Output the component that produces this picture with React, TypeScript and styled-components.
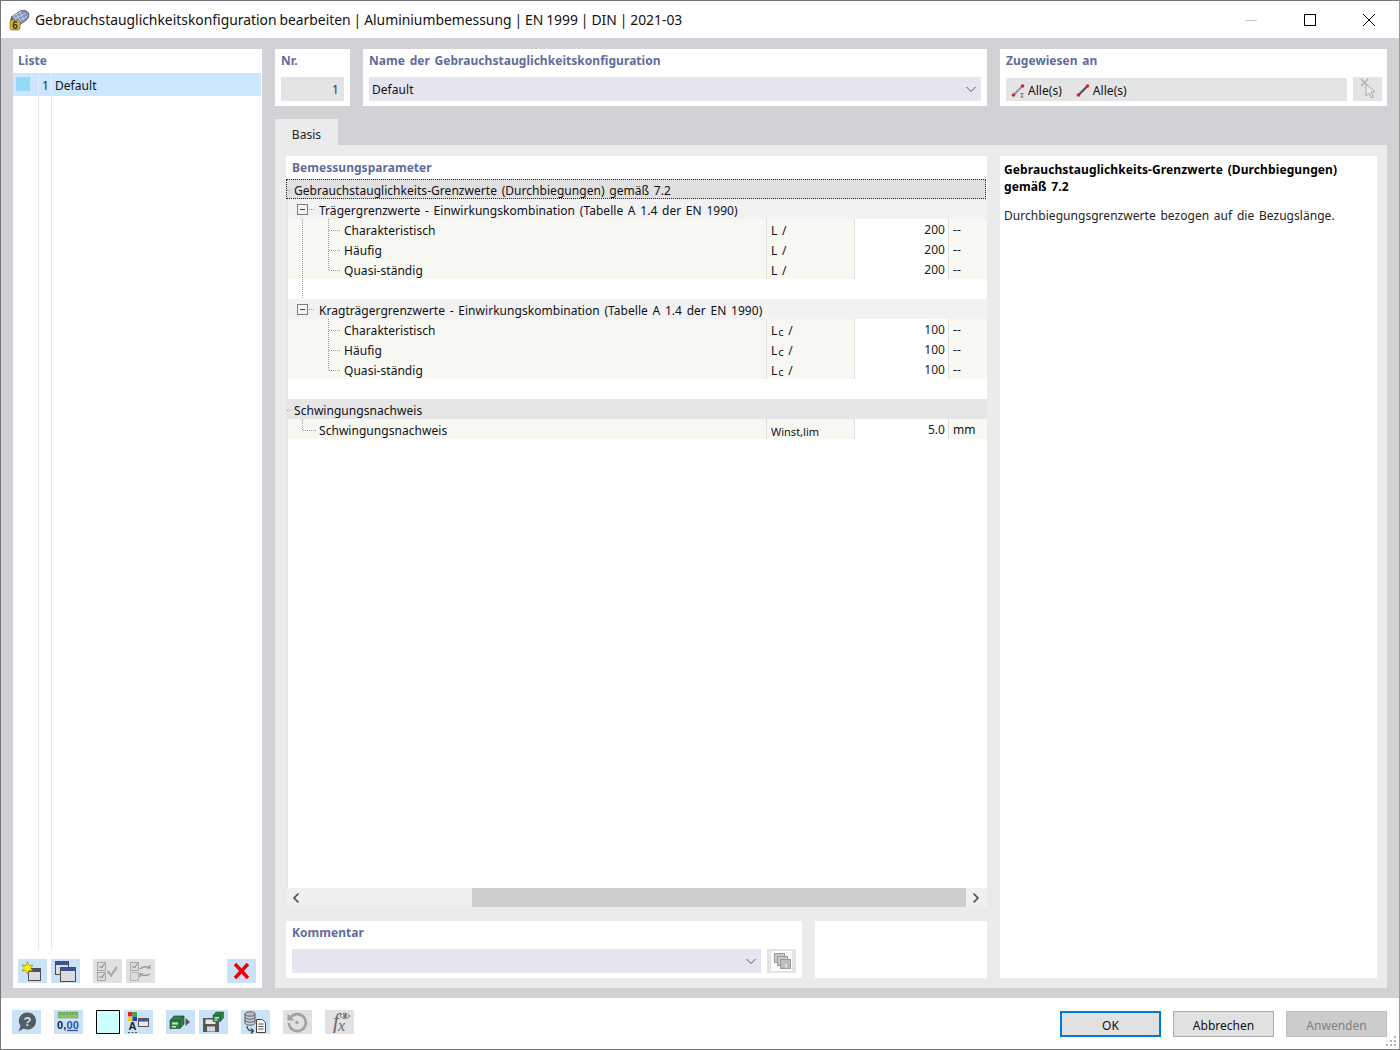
import React from "react";
import styled, { createGlobalStyle } from "styled-components";

const Global = createGlobalStyle`
  html, body { margin: 0; padding: 0; background: #fff; }
  body { font-family: "Noto Sans", "Open Sans", sans-serif; font-size: 12px; color: #101018; word-spacing: 1.5px; letter-spacing: 0.04px; }
  * { box-sizing: border-box; }
`;

const Win = styled.div`
  width: 1400px; height: 1050px; border: 1px solid #767676; border-right-color: #9a9a9a;
  display: grid; grid-template-rows: 37px 960px 1fr; background: #fff; overflow: hidden;
`;
const TitleBar = styled.header`
  display: flex; align-items: center; padding-left: 7px; background: #fff;
`;
const TitleText = styled.div`
  margin-left: 5px; font-size: 13.88px; flex: 1; white-space: nowrap; color: #111; word-spacing: -0.7px; letter-spacing: 0;
`;
const WinControls = styled.div`
  display: flex; width: 178px; padding-right: 1px; flex: none; height: 100%; align-items: center;
`;
const WinControl = styled.span`
  width: 59px; flex: none; display: flex; justify-content: center; align-items: center;
`;
const Main = styled.main`
  background: #d1d1d6; padding: 11px 12px 10px; display: grid;
  grid-template-columns: 249px 1112px; column-gap: 13px;
`;
const ListPanel = styled.section`
  background: #fff; display: flex; flex-direction: column; min-height: 0;
`;
const Label = styled.div`
  color: #5f6c9c; font-weight: 700; font-size: 12px; line-height: 16px; height: 24px; padding-top: 4px;
`;
const ListLabel = styled(Label)`padding-left: 5px;`;
const ListRow = styled.div`
  height: 23px; margin-right: 1px; background: #cce6fd; display: grid;
  grid-template-columns: 26px 13px 1fr; line-height: 25px;
`;
const Swatch = styled.span`
  display: block; height: 23px; padding: 4px 0 0 3px; border-right: 1px solid #e4f1fc;
  &::before { content: ""; display: block; width: 14px; height: 14px; background: #94d8f6; }
`;
const ListNum = styled.span`text-align: right; color: #0c2a50; padding-right: 2px; border-right: 1px solid #e4f1fc;`;
const ListName = styled.span`padding-left: 3px;`;
const ListBody = styled.div`
  flex: 1; display: grid; grid-template-columns: 26px 13px 1fr; min-height: 0;
`;
const ListCol = styled.div`border-right: 1px solid #e9e9e9; margin-bottom: 9px;`;
const ListTools = styled.div`
  height: 24px; margin: 0 0 5px 5px; display: flex; flex: none;
`;
const IconBtn = styled.button<{ $off?: boolean; $gap?: number }>`
  width: 29px; height: 24px; padding: 0; border: 0; flex: none;
  background: ${(p) => (p.$off ? "#e1e1e1" : "#c9e2f8")};
  margin-left: ${(p) => p.$gap ?? 0}px; display: flex; align-items: center; justify-content: center;
`;
const RightCol = styled.div`display: flex; flex-direction: column; min-height: 0;`;
const TopRow = styled.div`display: flex; gap: 13px; height: 57px; flex: none;`;
const TopBox = styled.section<{ $w: number }>`
  width: ${(p) => p.$w}px; flex: none; background: #fff; padding: 0 6px;
`;
const AssignBox = styled(TopBox)`padding-right: 5px;`;
const FieldGray = styled.div`
  height: 24px; background: #e4e4e4; text-align: right; padding: 4px 5px 0 0; line-height: 17px; margin-top: 4px; color: #333;
`;
const Select = styled.div`
  height: 24px; background: #e5e5f0; display: flex; align-items: center; justify-content: space-between;
  padding: 0 4px 0 3px; margin-top: 4px;
`;
const AssignRow = styled.div`display: flex; gap: 6px; height: 24px; margin-top: 4px;`;
const AssignField = styled.div`
  flex: 1; height: 23px; margin-top: 1px; background: #e4e4e4; display: flex; align-items: center; padding-left: 4px;
`;
const AssignItem = styled.span`
  display: inline-flex; align-items: center; gap: 2px; margin-right: 13px; line-height: 14px; padding-top: 2px;
`;
const PickBtn = styled.div`
  width: 29px; height: 24px; background: #e4e4e4; display: flex; align-items: center; justify-content: center;
`;
const Tabs = styled.div`display: flex; margin-top: 13px; height: 26px; flex: none;`;
const Tab = styled.div`
  width: 63px; background: #ebebeb; text-align: center; line-height: 32px; color: #222;
`;
const TabPanel = styled.div`
  flex: 1; min-height: 0; background: #ebebeb; padding: 11px 10px 10px 11px;
  display: grid; grid-template-columns: 701px 377px; column-gap: 13px;
`;
const LeftStack = styled.div`display: flex; flex-direction: column; gap: 14px; min-height: 0;`;
const Params = styled.section`flex: 1; background: #fff; display: flex; flex-direction: column; min-height: 0;`;
const ParamsLabel = styled(Label)`height: 23px; padding-left: 6px; flex: none;`;
const Table = styled.div`flex: 1; border-left: 2px solid #e6e6e6; display: flex; flex-direction: column; min-height: 0;`;
const Group = styled.div<{ $focus?: boolean }>`
  height: 20px; margin-left: -2px; padding-left: 1px; display: flex; align-items: flex-start; line-height: 24px; flex: none;
  background: ${(p) => (p.$focus ? "#e0e0e0" : "#e6e6e6")};
  outline: ${(p) => (p.$focus ? "1px dotted #222" : "none")};
  outline-offset: -1px; margin-right: ${(p) => (p.$focus ? 1 : 0)}px;
`;
const Sub = styled.div`
  height: 20px; background: #f2f2f2; display: flex; align-items: flex-start; line-height: 24px; flex: none;
`;
const Row = styled.div`
  height: 20px; display: grid; grid-template-columns: 478px 88px 94px 39px; grid-template-rows: 20px;
  background: #f7f8f2; flex: none;
`;
const NameCell = styled.div`display: flex; align-items: flex-start; white-space: nowrap; height: 20px; line-height: 24px;`;
const SymCell = styled.div`
  border-left: 1px solid #e0e0e0; padding-left: 4px; line-height: 24px; height: 20px; white-space: nowrap;
`;
const SmallSym = styled.span`font-size: 11px; word-spacing: 0; letter-spacing: 0; position: relative; top: 1px;`;
const LowC = styled.span`font-size: 11px; position: relative; top: 1px; padding-left: 1px;`;
const ValCell = styled.div`
  border-left: 1px solid #e0e0e0; background: #fff; text-align: right; padding-right: 3px; line-height: 22px; height: 20px; color: #222;
`;
const UnitCell = styled.div`border-left: 1px solid #e0e0e0; padding-left: 4px; line-height: 22px; height: 20px;`;
const Blank = styled.div`height: 20px; flex: none; display: flex;`;
const Scroll = styled.div`
  height: 19px; flex: none; background: #f0f0f0; display: grid; grid-template-columns: 186px 1fr 21px; align-items: center;
`;
const ScrollEnd = styled.span`display: flex; align-items: center; padding-left: 6px; height: 100%;`;
const ScrollThumb = styled.div`height: 19px; background: #cdcdcd;`;
const BottomRow = styled.div`display: flex; gap: 13px; height: 57px; flex: none;`;
const CommentBox = styled.section`width: 516px; background: #fff; padding: 0 6px;`;
const CommentRow = styled.div`display: flex; gap: 6px; margin-top: 4px;`;
const CommentSel = styled(Select)`flex: 1; margin-top: 0;`;
const SmallBtn = styled.div`
  width: 29px; height: 24px; background: #e4e4e4; display: flex; align-items: center; justify-content: center;
`;
const EmptyBox = styled.section`width: 172px; background: #fff;`;
const Desc = styled.aside`background: #fff; padding: 5px 4px; line-height: 17px;`;
const DescTitle = styled.div`font-weight: 700; color: #000; letter-spacing: 0.1px;`;
const DescText = styled.p`margin: 12px 0 0; color: #222;`;
const Footer = styled.footer`
  display: flex; align-items: flex-start; padding: 12px 12px 0 11px; position: relative; background: #fff;
`;
const ColorBox = styled.div`
  width: 24px; height: 24px; background: #ccffff; border: 1.5px solid #000; margin-left: 13px; flex: none;
`;
const Spacer = styled.div`flex: 1;`;
const DlgBtn = styled.button<{ $kind?: "primary" | "off" }>`
  width: 101px; height: 26px; margin: 1px 0 0 12px; font: inherit; padding: 2px 0 0;
  background: ${(p) => (p.$kind === "off" ? "#cccccc" : "#e1e1e1")};
  color: ${(p) => (p.$kind === "off" ? "#7f7f7f" : "#111")};
  border: ${(p) => (p.$kind === "primary" ? "2px solid #0078d7" : p.$kind === "off" ? "1px solid #bfbfbf" : "1px solid #adadad")};
`;
const Grip = styled.svg`position: absolute; right: 1px; bottom: 1px;`;

const dot = { stroke: "#9c9c9c", strokeWidth: 1, strokeDasharray: "1 1", fill: "none" } as const;

const Leaf = ({ last, trunk }: { last?: boolean; trunk?: boolean }) => (
  <svg width="56" height="20" style={{ flex: "none" }}>
    {trunk && <path d="M14.5 0V20" {...dot} />}
    <path d={last ? "M40.5 0V11" : "M40.5 0V20"} {...dot} />
    <path d="M41 11.5H53" {...dot} />
  </svg>
);
const Node = () => (
  <svg width="31" height="20" style={{ flex: "none" }}>
    <rect x="9.5" y="5.5" width="10" height="10" fill="#f4f4f4" stroke="#7d7d7d" />
    <path d="M12 10.5H17" stroke="#444" />
    <path d="M21 10.5H27" {...dot} />
  </svg>
);
const Trunk = () => (
  <svg width="31" height="20" style={{ flex: "none" }}>
    <path d="M14.5 0V20" {...dot} />
  </svg>
);
const SingleLeaf = () => (
  <svg width="31" height="20" style={{ flex: "none" }}>
    <path d="M14.5 0V11" {...dot} />
    <path d="M15 11.5H28" {...dot} />
  </svg>
);
const GroupStub = () => (
  <svg width="7" height="20" style={{ flex: "none" }}>
    <path d="M0 11.5H4" {...dot} />
  </svg>
);

const AppIcon = () => (
  <svg width="22" height="22" viewBox="0 0 22 22" style={{ flex: "none" }}>
    <path d="M3 8 L12 2 Q18 0 20.5 4 Q22 9 17 12 L10 17 Z" fill="#7f95bd" stroke="#454e62" strokeWidth="0.8" />
    <path d="M5 7 L14 2.5M7 10 L17 4.5M9 13 L19 7.5M11 2.5 L16 11M8 4.5 L13 13.5M5.5 6 L10 15" stroke="#d2dcec" strokeWidth="0.8" />
    <path d="M3 8 Q1 13 6 17 L10 17 Q6 12 3 8Z" fill="#525a68" />
    <rect x="2" y="11" width="10" height="10" rx="2" fill="#d8b63a" stroke="#6e5a16" strokeWidth="0.6" />
    <text x="7" y="19.5" fontSize="10" fontWeight="700" textAnchor="middle" fill="#3a3210" fontFamily="Liberation Sans">6</text>
  </svg>
);

const WinDialog = ({ x, y, w, h }: { x: number; y: number; w: number; h: number }) => (
  <g>
    <rect x={x + 0.5} y={y + 0.5} width={w - 1} height={h - 1} fill="#dcdcdc" stroke="#4d4d4d" />
    <rect x={x + 1} y={y + 1} width={w - 2} height="3" fill="#3c4f9a" />
  </g>
);
const NewIcon = () => (
  <svg width="29" height="24">
    <WinDialog x={10} y={9} w={13} h={13} />
    <path d="M9.5 3 L11 6.5 L15 6 L12.5 9 L15 12 L11 11.5 L9.5 15 L8 11.5 L4 12 L6.5 9 L4 6 L8 6.5 Z" fill="#fff200" stroke="#8a7a00" strokeWidth="0.6" />
  </svg>
);
const CopyIcon = () => (
  <svg width="29" height="24">
    <WinDialog x={4} y={2} w={14} h={14} />
    <WinDialog x={9} y={8} w={16} h={15} />
  </svg>
);
const CheckAllIcon = () => (
  <svg width="29" height="24" fill="none">
    <rect x="4.5" y="3.5" width="8" height="8" fill="#dcdcdc" stroke="#a6a6a6" />
    <rect x="4.5" y="13.5" width="8" height="8" fill="#dcdcdc" stroke="#a6a6a6" />
    <path d="M6.5 7l2 2 3-4.5M6.5 17l2 2 3-4.5" stroke="#777" />
    <path d="M14.5 12l3.5 4.5 6-8.5" stroke="#a9a9a9" strokeWidth="2.2" />
  </svg>
);
const CheckSwapIcon = () => (
  <svg width="29" height="24" fill="none">
    <rect x="4.5" y="3.5" width="8" height="8" fill="#dcdcdc" stroke="#a6a6a6" />
    <rect x="4.5" y="13.5" width="8" height="8" fill="#dcdcdc" stroke="#b6b6b6" />
    <path d="M6.5 7l2 2 3-4.5" stroke="#777" />
    <path d="M14 10q5-4 10-1M24 6v3h-3M24 15q-5 3-10 0M14 18v-3h3" stroke="#999" strokeWidth="1.4" />
  </svg>
);
const DeleteIcon = () => (
  <svg width="29" height="24">
    <path d="M8 5L21 19M21 5L8 19" stroke="#f00000" strokeWidth="3.4" />
  </svg>
);
const HelpIcon = () => (
  <svg width="29" height="24">
    <path d="M15.5 2.5a8.5 8.5 0 1 1-3.8 16.1L6.5 21.5l2-5.5A8.5 8.5 0 0 1 15.5 2.5z" fill="#555b63" />
    <text x="15.5" y="15.5" fontSize="13" fontWeight="700" fill="#c9e2f8" textAnchor="middle" fontFamily="Liberation Sans">?</text>
  </svg>
);
const DecimalIcon = () => (
  <svg width="29" height="24">
    <rect x="4" y="2" width="20" height="6" fill="#8cc26a" stroke="#6c9a50" strokeWidth="0.5" />
    <path d="M7 2v3M10 2v3M13 2v3M16 2v3M19 2v3M22 2v3" stroke="#4e7a38" strokeWidth="0.6" />
    <text x="14" y="18.5" fontSize="11" fontWeight="700" fill="#222" textAnchor="middle" fontFamily="Liberation Sans" letterSpacing="0.2">0,<tspan fill="#2e4fa8">00</tspan></text>
    <path d="M13 20.5H24" stroke="#2e4fa8" strokeWidth="1.2" />
  </svg>
);
const PaletteIcon = () => (
  <svg width="29" height="24">
    <rect x="4" y="2" width="4.5" height="4.5" fill="#e02020" />
    <rect x="8.5" y="2" width="4.5" height="4.5" fill="#30b030" />
    <rect x="4" y="6.5" width="4.5" height="4.5" fill="#f0d020" />
    <rect x="8.5" y="6.5" width="4.5" height="4.5" fill="#2040c0" />
    <text x="8.5" y="20" fontSize="11" fontWeight="700" fill="#222" textAnchor="middle" fontFamily="Liberation Sans">A</text>
    <path d="M4 22.5h2M7.5 22.5h2M11 22.5h2" stroke="#555" />
    <rect x="14.5" y="8.5" width="10" height="8" fill="#e8e8e8" stroke="#555" />
    <rect x="15" y="9" width="9" height="2.5" fill="#3b55b0" />
  </svg>
);
const Drawer = ({ x, y }: { x: number; y: number }) => (
  <g transform={`translate(${x} ${y})`}>
    <path d="M0 4.5 L4 0 H14 V8 L10 12.5 H0 Z" fill="#2f7f48" stroke="#1e4c2c" strokeWidth="0.7" />
    <path d="M0 4.5 H10 V12.5 M10 4.5 L14 0" fill="none" stroke="#1e4c2c" strokeWidth="0.7" />
    <path d="M2 6.5h6v2H2zM2 10h4v1.5H2z" fill="#c4e8ce" />
  </g>
);
const DrawerArrowIcon = () => (
  <svg width="29" height="24">
    <Drawer x={4} y={6} />
    <path d="M19.5 8 L24 12 L19.5 16Z" fill="#555" />
  </svg>
);
const SaveIcon = () => (
  <svg width="29" height="24">
    <path d="M4 8h14l2 2v12H4z" fill="#565656" />
    <rect x="6.5" y="9.5" width="10" height="4.5" fill="#e6e6e6" />
    <rect x="8" y="16.5" width="8" height="5" fill="#d8d8d8" />
    <g transform="translate(14 2) scale(0.75)"><Drawer x={0} y={0} /></g>
  </svg>
);
const DbDocIcon = () => (
  <svg width="29" height="24">
    <path d="M4 4v3c0 1.3 2.3 2.2 5 2.2s5-.9 5-2.2V4M4 7v3c0 1.3 2.3 2.2 5 2.2s5-.9 5-2.2V7M4 10v3c0 1.3 2.3 2.2 5 2.2s5-.9 5-2.2v-3" fill="#c8ccd4" stroke="#444" strokeWidth="0.8" />
    <ellipse cx="9" cy="4" rx="5" ry="2.2" fill="#b8bec8" stroke="#444" strokeWidth="0.8" />
    <path d="M6 16q0 5 6 5M10 18.5l2.5 2.5-2.500 2.500" fill="none" stroke="#333" strokeWidth="1.1" />
    <path d="M15.5 9.5h6l3 3v10h-9z" fill="#f4f4f4" stroke="#444" />
    <path d="M17.5 14h5M17.5 16.5h5M17.5 19h5" stroke="#555" />
  </svg>
);
const UndoIcon = () => (
  <svg width="29" height="24" fill="none">
    <path d="M7.5 7.5A8.5 8.5 0 1 1 5.8 13" stroke="#a2a2a2" strokeWidth="2.6" />
    <path d="M4.5 3.5v7h7z" fill="#a2a2a2" />
    <circle cx="14" cy="12.5" r="1.7" fill="#a2a2a2" />
  </svg>
);
const FxIcon = () => (
  <svg width="29" height="24">
    <text x="8" y="18" fontSize="21" fontStyle="italic" fill="#6a6a6a" fontFamily="Liberation Serif">f</text>
    <text x="13" y="21" fontSize="16" fontStyle="italic" fill="#6a6a6a" fontFamily="Liberation Serif">x</text>
    <path d="M15 6q4.500-5.500 10 0q-5.500 5-10 0z" fill="#eee" stroke="#777" />
    <circle cx="20" cy="6" r="2" fill="#777" />
  </svg>
);
const Chevron = () => (
  <svg width="12" height="12" fill="none"><path d="M1.5 4L6 8.5 10.5 4" stroke="#555" strokeWidth="1" /></svg>
);
const MemberIcon = ({ tick }: { tick?: boolean }) => (
  <svg width="16" height="16" style={{ flex: "none" }}>
    <path d="M4 11.5 L12 3.5" stroke={tick ? "#8d99b8" : "#4a4a4a"} strokeWidth="2" />
    <circle cx="3.5" cy="12" r="1.8" fill="#d5212e" />
    <circle cx="12.5" cy="3" r="1.8" fill="#d5212e" />
    {tick && <path d="M10.5 10.5h3M12 10.5v3.5M10.5 14h3" stroke="#666" strokeWidth="0.8" />}
  </svg>
);
const PickIcon = () => (
  <svg width="24" height="24" fill="none">
    <path d="M5 2l7 7M12 2l-7 7" stroke="#aaa" strokeWidth="1.1" />
    <path d="M10 7v12l3-3 2.4 5 2-1-2.4-5h4z" fill="#eee" stroke="#a8a8a8" />
  </svg>
);
const StackIcon = () => (
  <svg width="21" height="20">
    <rect width="21" height="20" fill="#fff" />
    <rect x="3.5" y="2.5" width="10" height="9" fill="#c8c8c8" stroke="#9a9a9a" />
    <rect x="6.5" y="5.5" width="10" height="9" fill="#c8c8c8" stroke="#9a9a9a" />
    <rect x="9.5" y="8.5" width="10" height="9" fill="#bdbdbd" stroke="#9a9a9a" />
    <path d="M15 13v3" stroke="#fff" />
  </svg>
);

const rowsA = [
  { name: "Charakteristisch" },
  { name: "Häufig" },
  { name: "Quasi-ständig", last: true },
];

const Sym = ({ c }: { c?: boolean }) =>
  c ? (
    <SymCell>L<LowC>c</LowC> /</SymCell>
  ) : (
    <SymCell>L /</SymCell>
  );

export default function App() {
  return (
    <Win>
      <Global />
      <TitleBar>
        <AppIcon />
        <TitleText>Gebrauchstauglichkeitskonfiguration bearbeiten | Aluminiumbemessung | EN 1999 | DIN | 2021-03</TitleText>
        <WinControls>
          <WinControl>
            <svg width="12" height="12"><path d="M0 6.5H12" stroke="#c4c4c4" /></svg>
          </WinControl>
          <WinControl>
            <svg width="12" height="12"><rect x="0.5" y="0.5" width="11" height="11" fill="none" stroke="#000" /></svg>
          </WinControl>
          <WinControl>
            <svg width="12" height="12"><path d="M0 0L12 12M12 0L0 12" stroke="#000" /></svg>
          </WinControl>
        </WinControls>
      </TitleBar>

      <Main>
        <ListPanel>
          <ListLabel>Liste</ListLabel>
          <ListRow>
            <Swatch />
            <ListNum>1</ListNum>
            <ListName>Default</ListName>
          </ListRow>
          <ListBody>
            <ListCol />
            <ListCol />
          </ListBody>
          <ListTools>
            <IconBtn aria-label="Neu"><NewIcon /></IconBtn>
            <IconBtn $gap={4} aria-label="Kopieren"><CopyIcon /></IconBtn>
            <IconBtn $gap={13} $off aria-label="Alle"><CheckAllIcon /></IconBtn>
            <IconBtn $gap={4} $off aria-label="Umkehren"><CheckSwapIcon /></IconBtn>
            <IconBtn $gap={72} aria-label="Löschen"><DeleteIcon /></IconBtn>
          </ListTools>
        </ListPanel>

        <RightCol>
          <TopRow>
            <TopBox $w={75}>
              <Label>Nr.</Label>
              <FieldGray>1</FieldGray>
            </TopBox>
            <TopBox $w={624}>
              <Label>Name der Gebrauchstauglichkeitskonfiguration</Label>
              <Select>Default<Chevron /></Select>
            </TopBox>
            <AssignBox $w={387}>
              <Label>Zugewiesen an</Label>
              <AssignRow>
                <AssignField>
                  <AssignItem><MemberIcon tick />Alle(s)</AssignItem>
                  <AssignItem><MemberIcon />Alle(s)</AssignItem>
                </AssignField>
                <PickBtn><PickIcon /></PickBtn>
              </AssignRow>
            </AssignBox>
          </TopRow>

          <Tabs><Tab>Basis</Tab></Tabs>
          <TabPanel>
            <LeftStack>
              <Params>
                <ParamsLabel>Bemessungsparameter</ParamsLabel>
                <Table>
                  <Group $focus><GroupStub />Gebrauchstauglichkeits-Grenzwerte (Durchbiegungen) gemäß 7.2</Group>
                  <Sub><Node />Trägergrenzwerte - Einwirkungskombination (Tabelle A 1.4 der EN 1990)</Sub>
                  {rowsA.map((r) => (
                    <Row key={r.name}>
                      <NameCell><Leaf trunk last={r.last} />{r.name}</NameCell>
                      <Sym />
                      <ValCell>200</ValCell>
                      <UnitCell>--</UnitCell>
                    </Row>
                  ))}
                  <Blank><Trunk /></Blank>
                  <Sub><Node />Kragträgergrenzwerte - Einwirkungskombination (Tabelle A 1.4 der EN 1990)</Sub>
                  {rowsA.map((r) => (
                    <Row key={r.name}>
                      <NameCell><Leaf last={r.last} />{r.name}</NameCell>
                      <Sym c />
                      <ValCell>100</ValCell>
                      <UnitCell>--</UnitCell>
                    </Row>
                  ))}
                  <Blank />
                  <Group><GroupStub />Schwingungsnachweis</Group>
                  <Row>
                    <NameCell><SingleLeaf />Schwingungsnachweis</NameCell>
                    <SymCell><SmallSym>Winst,lim</SmallSym></SymCell>
                    <ValCell>5.0</ValCell>
                    <UnitCell>mm</UnitCell>
                  </Row>
                </Table>
                <Scroll>
                  <ScrollEnd>
                    <svg width="8" height="12" fill="none"><path d="M6.5 1.5L2 6l4.5 4.5" stroke="#444" strokeWidth="1.5" /></svg>
                  </ScrollEnd>
                  <ScrollThumb />
                  <ScrollEnd>
                    <svg width="8" height="12" fill="none"><path d="M1.5 1.5L6 6l-4.5 4.5" stroke="#444" strokeWidth="1.5" /></svg>
                  </ScrollEnd>
                </Scroll>
              </Params>
              <BottomRow>
                <CommentBox>
                  <Label>Kommentar</Label>
                  <CommentRow>
                    <CommentSel><span /><Chevron /></CommentSel>
                    <SmallBtn><StackIcon /></SmallBtn>
                  </CommentRow>
                </CommentBox>
                <EmptyBox />
              </BottomRow>
            </LeftStack>
            <Desc>
              <DescTitle>Gebrauchstauglichkeits-Grenzwerte (Durchbiegungen) gemäß 7.2</DescTitle>
              <DescText>Durchbiegungsgrenzwerte bezogen auf die Bezugslänge.</DescText>
            </Desc>
          </TabPanel>
        </RightCol>
      </Main>

      <Footer>
        <IconBtn aria-label="Hilfe"><HelpIcon /></IconBtn>
        <IconBtn $gap={13} aria-label="Dezimalstellen"><DecimalIcon /></IconBtn>
        <ColorBox />
        <IconBtn $gap={4} aria-label="Farben"><PaletteIcon /></IconBtn>
        <IconBtn $gap={13} aria-label="Laden"><DrawerArrowIcon /></IconBtn>
        <IconBtn $gap={4} aria-label="Speichern"><SaveIcon /></IconBtn>
        <IconBtn $gap={13} aria-label="Datenbank"><DbDocIcon /></IconBtn>
        <IconBtn $gap={13} $off aria-label="Zurücksetzen"><UndoIcon /></IconBtn>
        <IconBtn $gap={13} $off aria-label="Formel"><FxIcon /></IconBtn>
        <Spacer />
        <DlgBtn $kind="primary">OK</DlgBtn>
        <DlgBtn>Abbrechen</DlgBtn>
        <DlgBtn $kind="off">Anwenden</DlgBtn>
        <Grip width="12" height="12" fill="#b4b4b4">
          <rect x="8" y="0" width="2" height="2" />
          <rect x="4" y="4" width="2" height="2" /><rect x="8" y="4" width="2" height="2" />
          <rect x="0" y="8" width="2" height="2" /><rect x="4" y="8" width="2" height="2" /><rect x="8" y="8" width="2" height="2" />
        </Grip>
      </Footer>
    </Win>
  );
}
